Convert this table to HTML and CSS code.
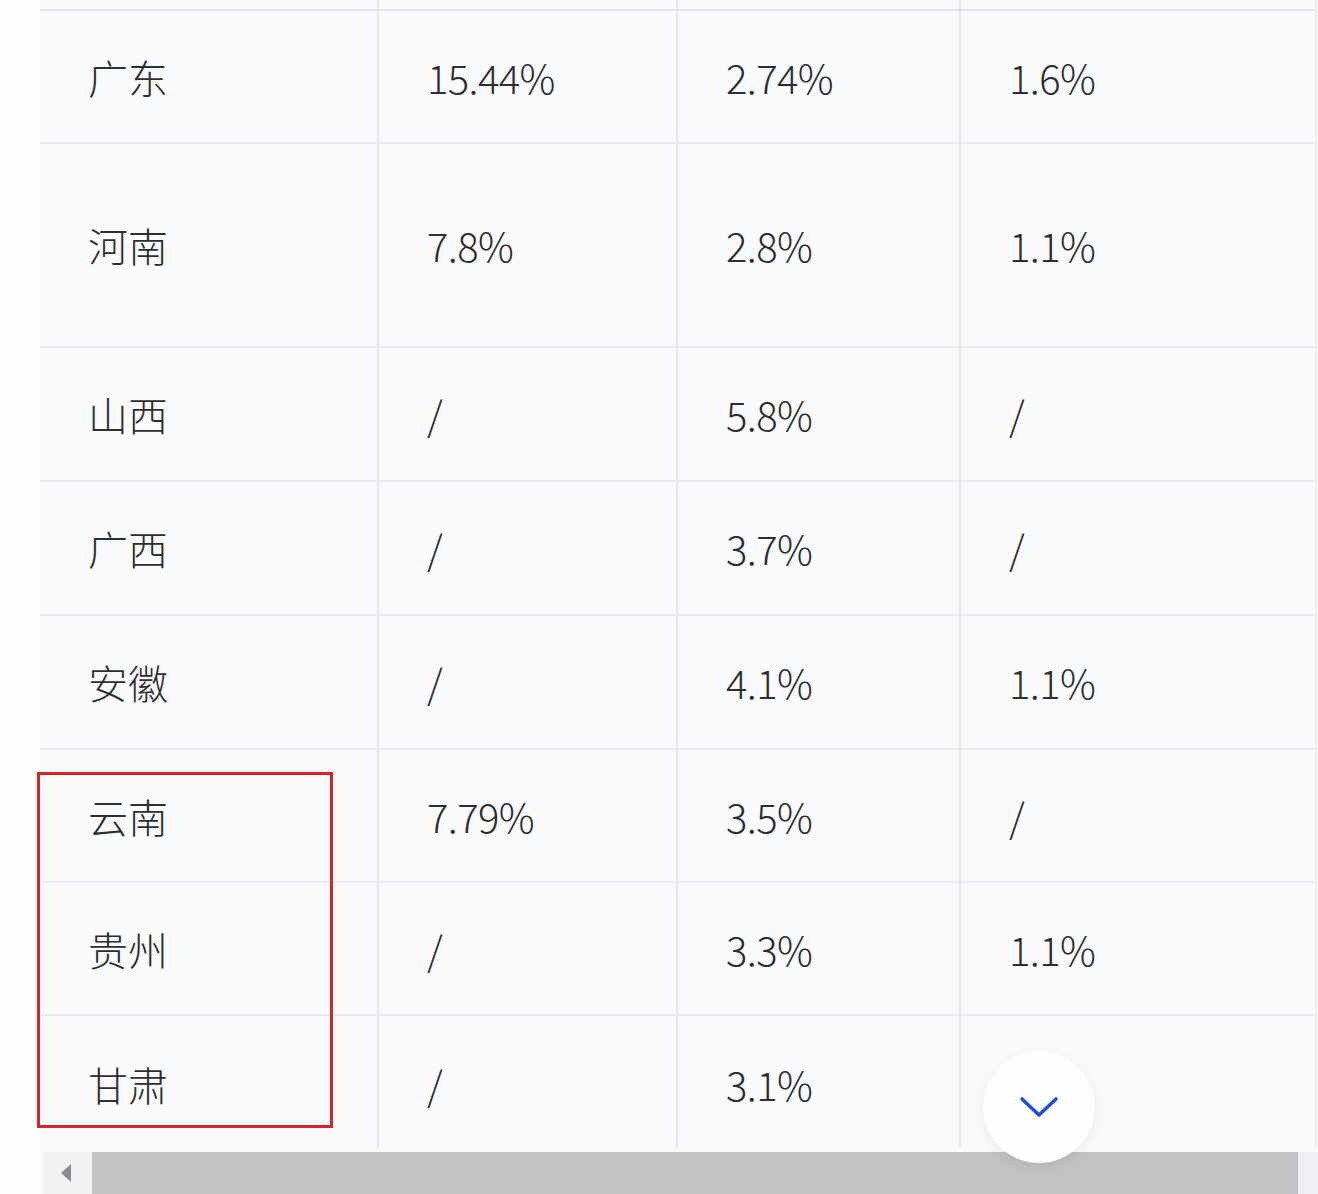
FILE: index.html
```html
<!DOCTYPE html>
<html>
<head>
  <meta charset="utf-8">
  <title>各省数据</title>
  <link rel="stylesheet" href="styles.css">
</head>
<body>

  <div class="sheet">
    <table class="data-table">
      <colgroup>
        <col class="col-name">
        <col class="col-a">
        <col class="col-b">
        <col class="col-c">
      </colgroup>
      <tbody>
        <tr class="row-cut"><td></td><td></td><td></td><td></td></tr>
        <tr><td>广东</td><td>15.44%</td><td>2.74%</td><td>1.6%</td></tr>
        <tr class="row-tall"><td>河南</td><td>7.8%</td><td>2.8%</td><td>1.1%</td></tr>
        <tr class="row-mid"><td>山西</td><td>/</td><td>5.8%</td><td>/</td></tr>
        <tr class="row-mid"><td>广西</td><td>/</td><td>3.7%</td><td>/</td></tr>
        <tr class="row-mid"><td>安徽</td><td>/</td><td>4.1%</td><td>1.1%</td></tr>
        <tr><td>云南</td><td>7.79%</td><td>3.5%</td><td>/</td></tr>
        <tr><td>贵州</td><td>/</td><td>3.3%</td><td>1.1%</td></tr>
        <tr class="row-last"><td>甘肃</td><td>/</td><td>3.1%</td><td></td></tr>
      </tbody>
    </table>

    <!-- horizontal scroll bar -->
    <div class="hscroll">
      <div class="hscroll-btn"><span class="arrow-left"></span></div>
      <div class="hscroll-thumb"></div>
      <div class="hscroll-end"></div>
    </div>

    <!-- highlighted rows -->
    <div class="mark-box"></div>

    <button class="more-btn" type="button">
      <svg width="40" height="24" viewBox="0 0 40 24">
        <polyline points="3,4 20,20 37,4" fill="none" stroke="#1e4fd3" stroke-width="3.6" stroke-linecap="round" stroke-linejoin="round"/>
      </svg>
    </button>
  </div>

</body>
</html>
```

FILE: styles.css
```css
body {
  margin: 0;
  background: #fefefe;
  font-family: "Noto Sans CJK SC", "Noto Sans", sans-serif;
  overflow: hidden;
}

.sheet {
  position: relative;
  margin-left: 40px;
  width: 1278px;
  background: #f9fafc;
}

.data-table {
  width: 1276px;
  border-collapse: collapse;
  table-layout: fixed;
  border-right: 2px solid #eceef1;
}

.col-name { width: 338px; }
.col-a { width: 299px; }
.col-b { width: 283px; }
.col-c { width: 356px; }

.data-table tr {
  height: 133px;
}

.data-table td {
  padding: 0 0 0 48px;
  font-size: 40px;
  line-height: 1;
  font-weight: 300;
  color: #2e2e2e;
  border-bottom: 2px solid #e9ebef;
  border-left: 2px solid #e4e6eb;
  vertical-align: middle;
}

.data-table td + td {
  letter-spacing: -0.6px;
}

.data-table td:first-child {
  border-left: none;
}

.data-table .row-cut {
  height: 10px;
}

.data-table .row-cut td {
  padding: 0;
  border-bottom: 2px solid #e3e5e9;
}

.data-table .row-tall {
  height: 204px;
}

.data-table .row-mid {
  height: 134px;
}

.data-table .row-last td {
  padding-top: 4px;
  border-bottom: none;
}

/* Scroll bar */
.hscroll {
  display: flex;
  height: 42px;
  margin: 4px 0 0 2px;
}

.hscroll-btn {
  width: 50px;
  background: #f1f2f4;
  display: flex;
  align-items: center;
  justify-content: center;
}

.arrow-left {
  width: 0;
  height: 0;
  border-top: 9px solid transparent;
  border-bottom: 9px solid transparent;
  border-right: 10px solid #8b8c8f;
  margin-right: 3px;
}

.hscroll-thumb {
  flex: 1;
  background: #c1c2c4;
}

.hscroll-end {
  width: 20px;
  background: #eeeff2;
}

/* Red annotation box */
.mark-box {
  position: absolute;
  left: -3px;
  top: 772px;
  width: 290px;
  height: 350px;
  border: 3px solid #d8232e;
}

.more-btn {
  position: absolute;
  left: 943px;
  top: 1051px;
  width: 112px;
  height: 112px;
  border: none;
  border-radius: 50%;
  background: #fdfdfe;
  box-shadow: 0 3px 14px rgba(0, 0, 0, 0.07);
  display: flex;
  align-items: center;
  justify-content: center;
  padding: 0;
  cursor: pointer;
}
```
